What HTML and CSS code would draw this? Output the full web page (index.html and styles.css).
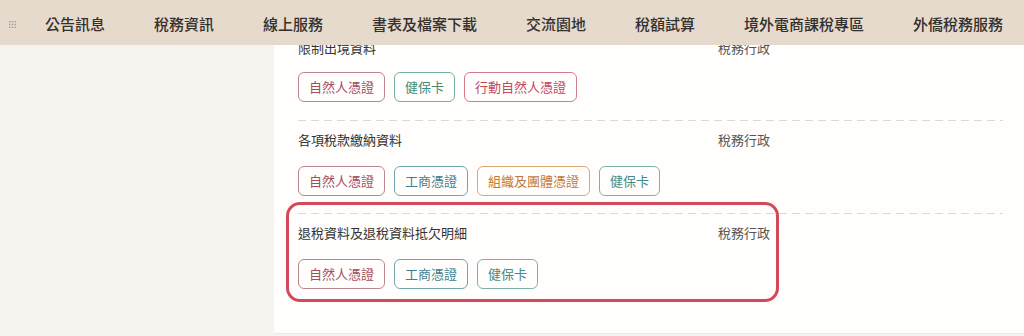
FILE: index.html
```html
<!DOCTYPE html>
<html lang="zh-Hant">
<head>
<meta charset="utf-8">
<title>稅務服務</title>
<link rel="stylesheet" href="styles.css">
</head>
<body>
<header class="nav">
  <span class="grip">
    <svg width="7" height="7" viewBox="0 0 7 7"><g fill="#a39a90"><rect x="0" y="0" width="1.4" height="1.4"/><rect x="2.8" y="0" width="1.4" height="1.4"/><rect x="5.6" y="0" width="1.4" height="1.4"/><rect x="0" y="2.8" width="1.4" height="1.4"/><rect x="2.8" y="2.8" width="1.4" height="1.4"/><rect x="5.6" y="2.8" width="1.4" height="1.4"/><rect x="0" y="5.6" width="1.4" height="1.4"/><rect x="2.8" y="5.6" width="1.4" height="1.4"/><rect x="5.6" y="5.6" width="1.4" height="1.4"/></g></svg>
  </span>
  <nav class="nav-items">
    <a class="nav-item">公告訊息</a>
    <a class="nav-item">稅務資訊</a>
    <a class="nav-item">線上服務</a>
    <a class="nav-item">書表及檔案下載</a>
    <a class="nav-item">交流園地</a>
    <a class="nav-item">稅額試算</a>
    <a class="nav-item">境外電商課稅專區</a>
    <a class="nav-item">外僑稅務服務</a>
  </nav>
</header>
<div class="page">
  <aside class="side"></aside>
  <main class="panel">
    <div class="row first">
      <div class="title">限制出境資料</div>
      <div class="cat">稅務行政</div>
      <div class="tags">
        <span class="tag t-nat">自然人憑證</span>
        <span class="tag t-nhi">健保卡</span>
        <span class="tag t-mob">行動自然人憑證</span>
      </div>
    </div>
    <div class="row">
      <div class="title">各項稅款繳納資料</div>
      <div class="cat">稅務行政</div>
      <div class="tags">
        <span class="tag t-nat">自然人憑證</span>
        <span class="tag t-biz">工商憑證</span>
        <span class="tag t-org">組織及團體憑證</span>
        <span class="tag t-nhi2">健保卡</span>
      </div>
    </div>
    <div class="row marked">
      <span class="highlight"></span>
      <div class="title">退稅資料及退稅資料抵欠明細</div>
      <div class="cat">稅務行政</div>
      <div class="tags">
        <span class="tag t-nat">自然人憑證</span>
        <span class="tag t-biz">工商憑證</span>
        <span class="tag t-nhi2">健保卡</span>
      </div>
    </div>
  </main>
</div>
</body>
</html>
```

FILE: styles.css
```css
html, body {
  margin: 0;
  padding: 0;
}
body {
  width: 1024px;
  height: 336px;
  overflow: hidden;
  background: #f6f3ee;
  font-family: "Noto Sans CJK TC", "Noto Sans", sans-serif;
  color: #333;
}
.nav {
  position: fixed;
  top: 0;
  left: 0;
  right: 0;
  height: 45px;
  background: #e6dacc;
  display: flex;
  align-items: center;
  padding-top: 3px;
  box-sizing: border-box;
  z-index: 10;
}
.grip {
  display: flex;
  margin-left: 9px;
  width: 36px;
}
.nav-items {
  display: flex;
  gap: 49px;
}
.nav-item {
  font-size: 15px;
  line-height: 20px;
  font-weight: 500;
  color: #34302c;
  white-space: nowrap;
}
.page {
  display: flex;
}
.side {
  width: 274px;
  flex: none;
}
.panel {
  flex: 1;
  background: #fffefc;
  padding: 28px 21px 28px 24px;
  box-shadow: 0 1px 0 #ece8e1;
}
.row {
  display: grid;
  grid-template-columns: 420px 1fr;
  padding: 10px 0 16px;
  background-image: repeating-linear-gradient(to right, #d9d9d9 0 8px, transparent 8px 13px);
  background-size: 100% 1px;
  background-repeat: no-repeat;
  border-top: 1px solid transparent;
}
.row.first {
  background-image: none;
  border-top: 0;
  padding-bottom: 17px;
}
.title, .cat {
  font-size: 13px;
  line-height: 20px;
}
.title { color: #333; }
.cat { color: #555; }
.tags {
  grid-column: 1 / -1;
  display: flex;
  gap: 9px;
  margin-top: 16px;
}
.row.first .tags {
  margin-top: 14px;
}
.tag {
  font-size: 13px;
  line-height: 28px;
  padding: 0 10px;
  border: 1px solid;
  border-radius: 6px;
  white-space: nowrap;
}
.t-nat { color: #a34d5e; border-color: #b88790; }
.t-nhi { color: #3f8c76; border-color: #76b0a0; }
.t-mob { color: #c2485e; border-color: #cf7f8c; }
.t-biz { color: #3d7f8e; border-color: #72a6b0; }
.t-org { color: #c07a3c; border-color: #d8a878; }
.t-nhi2 { color: #468a86; border-color: #7db2aa; }
.marked {
  position: relative;
}
.highlight {
  position: absolute;
  top: -11px;
  left: -12px;
  width: 493px;
  bottom: 3px;
  border: 3px solid #d24a5a;
  border-radius: 14px;
  box-sizing: border-box;
  pointer-events: none;
}
```
